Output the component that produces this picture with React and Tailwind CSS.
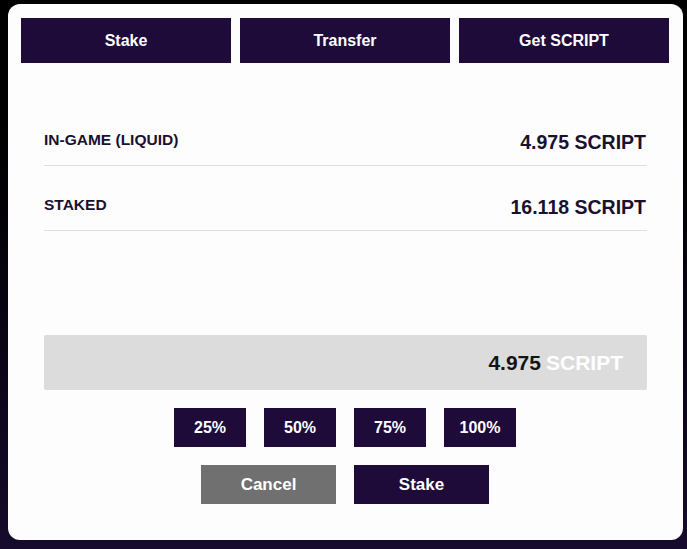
import React, { useState } from 'react';

const TABS = ['Stake', 'Transfer', 'Get SCRIPT'];
const BALANCES = [
  { label: 'IN-GAME (LIQUID)', value: '4.975 SCRIPT' },
  { label: 'STAKED', value: '16.118 SCRIPT' },
];
const PCTS = ['25%', '50%', '75%', '100%'];

export default function App() {
  const [amount, setAmount] = useState('4.975');

  return (
    <div
      className="w-[687px] h-[549px] pt-[4px] pl-[8px] bg-gradient-to-b from-black via-[#07030f] to-[#160b2c]"
      style={{ fontFamily: '"Liberation Sans", Arial, sans-serif' }}
    >
      <div className="w-[675px] h-[536px] bg-[#fdfdfd] rounded-[12px] px-[13px] pt-[14px]">
        <div className="flex gap-[9px]">
          {TABS.map(t => (
            <button key={t} className="w-[210px] h-[45px] bg-[#1e0b3a] text-white text-[16px] font-bold">
              {t}
            </button>
          ))}
        </div>

        <div className="mx-[23px] mt-[38px]">
          {BALANCES.map(b => (
            <div key={b.label} className="h-[65px] pt-[13px] flex items-center justify-between border-b border-[#dedede] text-[#1a1030]">
              <span className="text-[15.5px] font-bold">{b.label}</span>
              <span className="text-[19.5px] font-bold mt-[6px] mr-[1px]">{b.value}</span>
            </div>
          ))}

          <div className="mt-[104px] h-[55px] bg-[#dcdcdc] rounded-[2px] flex items-center justify-end pr-[24px] text-[21px] font-bold">
            <span className="text-[#141414]">{amount}</span>
            <span className="text-white ml-[5px]">SCRIPT</span>
          </div>

          <div className="mt-[18px] flex justify-center gap-[18px] pr-[1px]">
            {PCTS.map(p => (
              <button
                key={p}
                onClick={() => setAmount((4.975 * parseInt(p) / 100).toFixed(3))}
                className="w-[72px] h-[39px] bg-[#1e0b3a] text-white text-[16px] font-bold"
              >
                {p}
              </button>
            ))}
          </div>

          <div className="mt-[18px] flex justify-center gap-[18px] pr-[1px]">
            <button className="w-[135px] h-[39px] bg-[#707070] text-white text-[17px] font-bold">Cancel</button>
            <button className="w-[135px] h-[39px] bg-[#1e0b3a] text-white text-[17px] font-bold">Stake</button>
          </div>
        </div>
      </div>
    </div>
  );
}
